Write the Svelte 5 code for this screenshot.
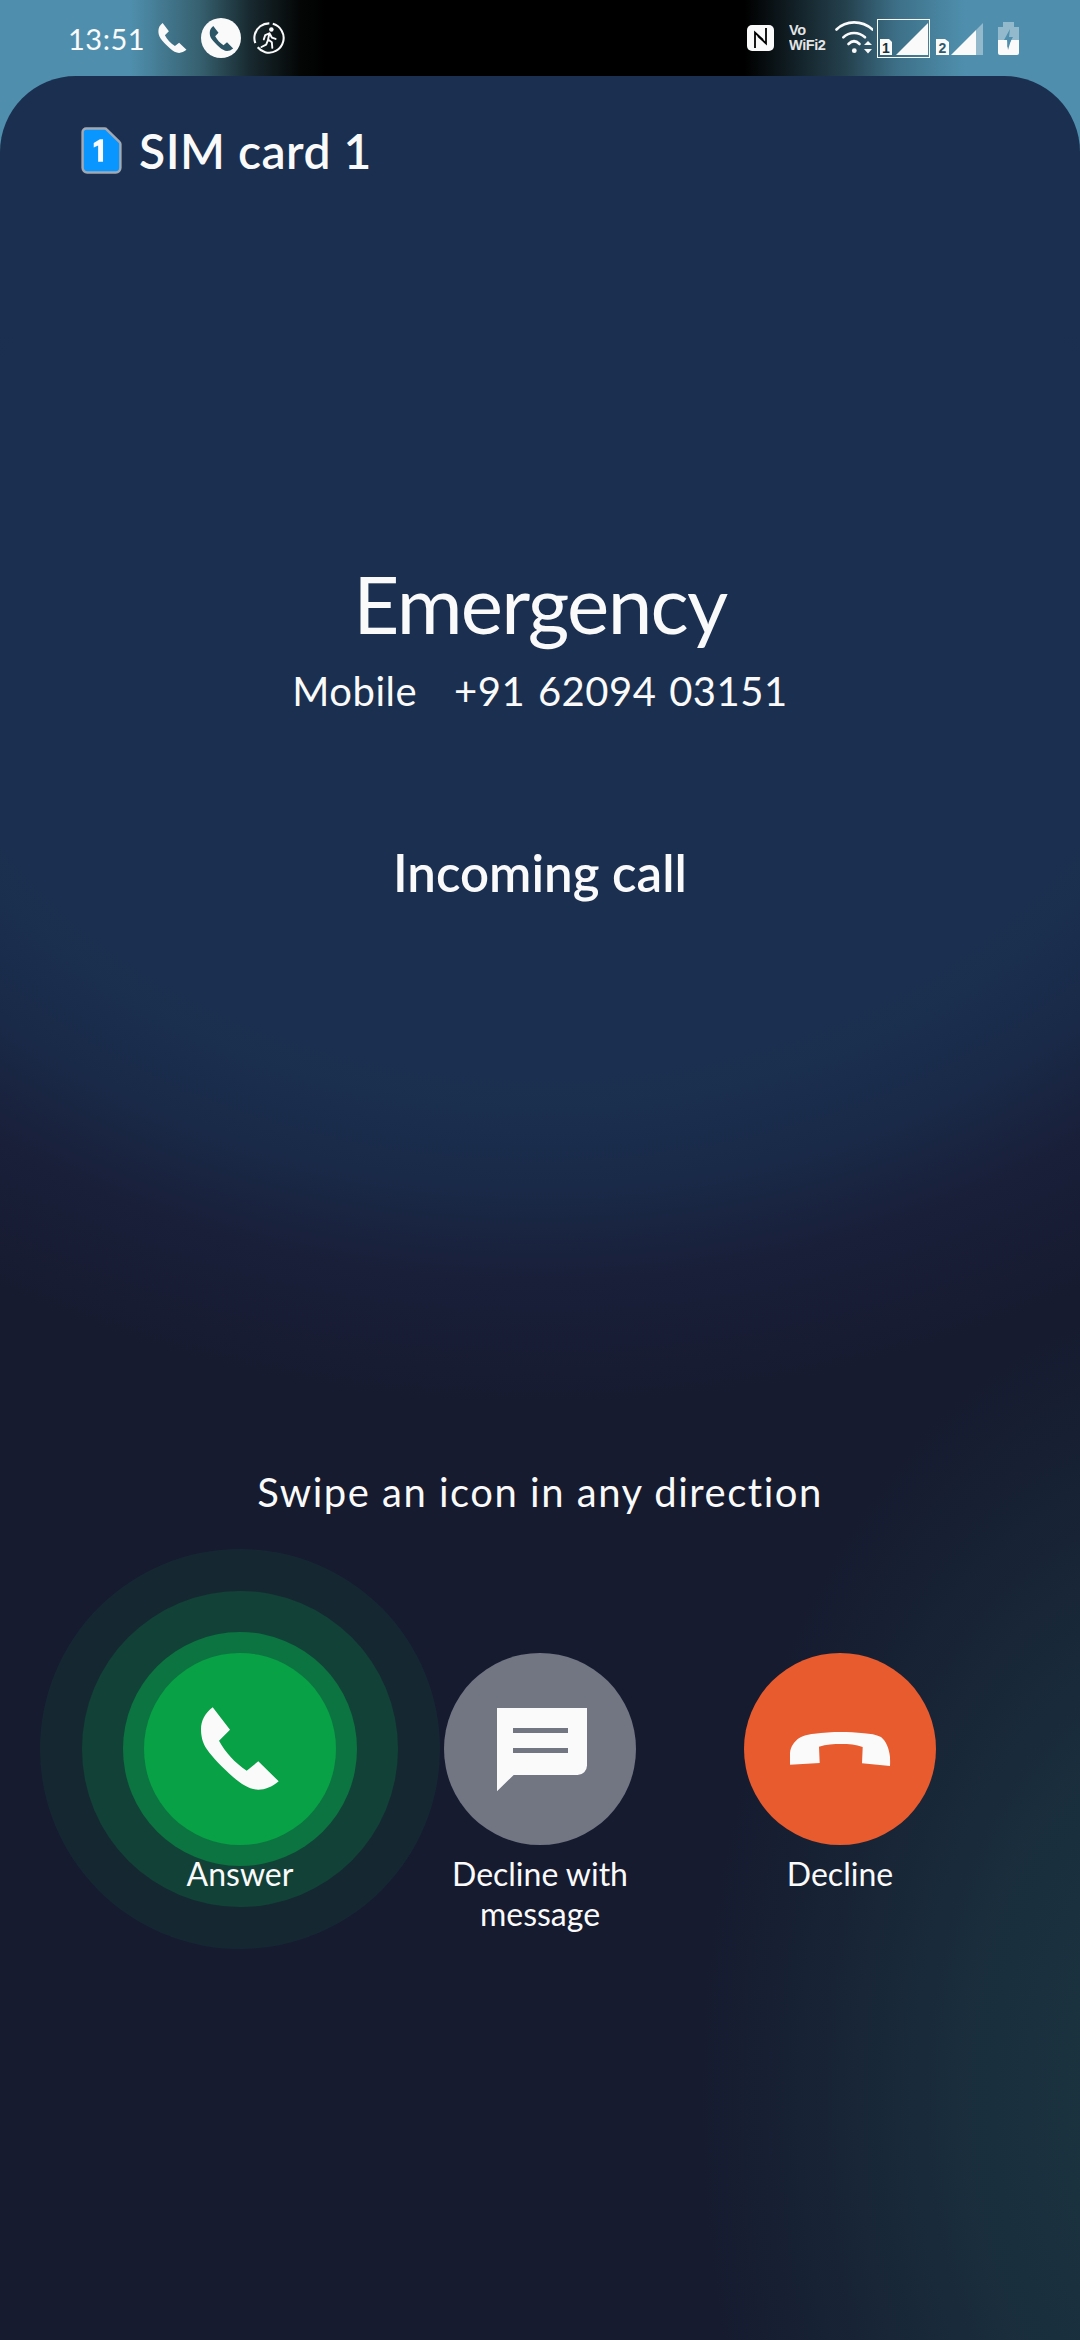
<script>
  const handset =
    'M68.7 54.3L86 76.7 75 87.7C82 100 90 109 102.7 117.7L114.3 108.3 134.7 128.3C128 134 121 136.7 114.3 136.7 106 136.7 97 131 89.3 124.3 78 114 69 105 62.7 96 58 89 57 82 57 76 57 68 61 60 68.7 54.3Z';
  const hangup =
    'M46 111.7L75.7 110 75 93.7C82 91.5 90 91 97 91 105 91 112 91.5 118.7 94L118 110.3 146 113C146.3 109 146 106 146 104 145 95 142 88 137 84 132 81.5 126 80.8 120 80.3 112 79.3 104 79 97 79 88 79 79 79.6 70.3 80.7 63 81.5 58 83 53.7 86 48 91 46 96 46 101Z';

  const actions = [
    { key: 'answer', label: 'Answer' },
    { key: 'message', label: 'Decline with message' },
    { key: 'decline', label: 'Decline' }
  ];
</script>

<div class="screen">
  <header class="status">
    <div class="status__left">
      <span class="time">13:51</span>
      <svg class="ic-call" viewBox="57 54 78 83"><path d={handset} fill="#fafafa" /></svg>
      <span class="ongoing">
        <svg viewBox="57 54 78 83"><path d={handset} fill="#2c5566" /></svg>
      </span>
      <svg class="ic-run" viewBox="0 0 36 36">
        <circle cx="18" cy="18" r="15.500" fill="none" stroke="#fafafa" stroke-width="2.200" stroke-dasharray="58 5 30 4" transform="rotate(-75 18 18)" />
        <circle cx="20.500" cy="9" r="2.400" fill="#fafafa" />
        <path d="M18.500 13l-4.500 2-1.500 4.500M18.500 13l-1.500 6.500 4 3 .5 6M18.500 13l2.500 4.500 4 1.500M17 20l-2 5-5 2.500" fill="none" stroke="#fafafa" stroke-width="2" stroke-linecap="round" stroke-linejoin="round" />
      </svg>
    </div>
    <div class="status__right">
      <svg class="ic-nfc" viewBox="0 0 27 26">
        <rect width="27" height="26" rx="5" fill="#fafafa" />
        <path d="M8 23V7.500L16 15M19 3v15.500L11 11" fill="none" stroke="#000" stroke-width="1.800" />
      </svg>
      <span class="vowifi"><span>Vo</span><span>WiFi2</span></span>
      <svg class="ic-wifi" viewBox="0 0 38 38">
        <g fill="none" stroke="#fafafa" stroke-width="2.600" stroke-linecap="round">
          <path d="M1.500 10.500C11 1 27 1 37.500 10.500" />
          <path d="M8.300 18.300C14 12.500 24 12.500 30 18.300" />
          <path d="M13.500 25C17 21.500 21 21.500 24.500 25" />
        </g>
        <circle cx="19.300" cy="31.700" r="2.400" fill="#fafafa" />
        <path d="M29 26l4-4 4 4zM29 30h8l-4 4.500z" fill="#fafafa" />
      </svg>
      <span class="signal signal--active">
        <svg viewBox="0 0 51 37">
          <path d="M2 19h9l3 3v13H2z" fill="#fafafa" />
          <text x="8" y="33" class="sim-no">1</text>
          <path d="M18 35L50 3v32z" fill="#fafafa" />
        </svg>
      </span>
      <svg class="ic-signal2" viewBox="0 0 48 37">
        <path d="M0 19h9l4 3v13H0z" fill="#fafafa" />
        <text x="6.500" y="33" class="sim-no sim-no--two">2</text>
        <path d="M15 35L40 10v25z" fill="#fafafa" />
        <path d="M40 10l7-7v32h-7z" fill="#fafafa" opacity="0.4" />
      </svg>
      <svg class="ic-battery" viewBox="0 0 21 33">
        <path d="M5 0h11v5h5v13H0V5h5z" fill="#fafafa" opacity="0.4" />
        <path d="M0 18h21v13a2 2 0 0 1-2 2H2a2 2 0 0 1-2-2z" fill="#fafafa" />
        <path d="M12 7L6 18h4l-1 8 6-11h-4z" fill="#4f8fad" />
        <path d="M9 18h4l-3 10z" fill="#4f8fad" />
      </svg>
    </div>
  </header>

  <main class="sheet">
    <div class="sim">
      <svg class="sim__icon" viewBox="0 0 40 46">
        <path d="M5 1.500h18a3 3 0 0 1 2.200 1L37.500 14.500a3 3 0 0 1 1 2.200V40a4.500 4.500 0 0 1-4.500 4.500H6A4.500 4.500 0 0 1 1.500 40V5A3.500 3.500 0 0 1 5 1.500z" fill="#0a96ff" stroke="#a3a9b3" stroke-width="2.400" />
        <path d="M21.500 12v22h-4.800V18l-4.300 2v-4.300l6-3.700z" fill="#fafafa" />
      </svg>
      <span>SIM card 1</span>
    </div>

    <section class="caller">
      <h1>Emergency</h1>
      <p class="caller__number"><span>Mobile</span><span>+91 62094 03151</span></p>
      <p class="caller__state">Incoming call</p>
    </section>

    <p class="hint">Swipe an icon in any direction</p>

    <div class="actions">
      {#each actions as action}
        <div class="action">
          <div class="action__btn action__btn--{action.key}">
            {#if action.key === 'answer'}
              <span class="ring ring--3"></span>
              <span class="ring ring--2"></span>
              <span class="ring ring--1"></span>
            {/if}
            <svg viewBox="0 0 192 192">
              {#if action.key === 'answer'}
                <path d={handset} fill="#fafafa" />
              {:else if action.key === 'message'}
                <path d="M53 55h90v57.500a9.500 9.500 0 0 1-9.500 9.500H69.700L53 138.300z" fill="#fafafa" />
                <path d="M69 75h55v5H69zM69 95h55v5H69z" fill="#727582" />
              {:else}
                <path d={hangup} fill="#fafafa" />
              {/if}
            </svg>
          </div>
          <span class="action__label">{action.label}</span>
        </div>
      {/each}
    </div>
  </main>
</div>

<style>
  :global(body) {
    margin: 0;
    background: #161b30;
  }

  .screen {
    width: 1080px;
    height: 2340px;
    display: flex;
    flex-direction: column;
    overflow: hidden;
    font-family: Lato, 'Liberation Sans', sans-serif;
    color: #fafafa;
    background: linear-gradient(90deg, #4f8fad 0, #4f8fad 130px, #36606f 200px, #18292f 250px, #040606 300px, #000 325px, #000 745px, #25424f 847px, #3d7088 897px, #4f8fad 965px);
  }

  .status {
    height: 76px;
    flex: none;
    display: flex;
    justify-content: space-between;
    align-items: flex-start;
    padding: 0 61px 0 68px;
  }

  .status__left,
  .status__right {
    display: flex;
    align-items: center;
  }

  .time {
    width: 90px;
    height: 76px;
    line-height: 78px;
    font-size: 29px;
    letter-spacing: 0.5px;
  }

  .ic-call {
    width: 29px;
    height: 30px;
  }

  .ongoing {
    width: 40px;
    height: 40px;
    margin-left: 14px;
    border-radius: 50%;
    background: #fafafa;
    display: flex;
    align-items: center;
    justify-content: center;
  }

  .ongoing svg {
    width: 25px;
    height: 25px;
  }

  .ic-run {
    width: 34px;
    height: 34px;
    margin-left: 11px;
  }

  .status__right {
    height: 76px;
  }

  .ic-nfc {
    width: 27px;
    height: 26px;
  }

  .vowifi {
    display: flex;
    flex-direction: column;
    width: 40px;
    margin-left: 15px;
    font: 700 14.500px/15px 'Liberation Sans', sans-serif;
    letter-spacing: -0.4px;
    opacity: 0.9;
  }

  .ic-wifi {
    width: 38px;
    height: 38px;
    margin-left: 6px;
  }

  .signal--active {
    width: 53px;
    height: 39px;
    margin-left: 4px;
    box-sizing: border-box;
    border: 1px solid #fafafa;
    display: block;
  }

  .signal--active svg {
    display: block;
    width: 51px;
    height: 37px;
  }

  .sim-no {
    font: 700 14px 'Liberation Sans', sans-serif;
    text-anchor: middle;
    fill: #1c3038;
  }

  .sim-no--two {
    fill: #2f5a6c;
  }

  .ic-signal2 {
    width: 48px;
    height: 37px;
    margin-left: 6px;
  }

  .ic-battery {
    width: 21px;
    height: 33px;
    margin-left: 14px;
  }

  .sheet {
    flex: 1;
    display: flex;
    flex-direction: column;
    align-items: center;
    border-radius: 76px 76px 0 0;
    background:
      radial-gradient(500px 800px at 1200px 2024px, #1b3541 0, rgba(27, 53, 65, 0.75) 45%, rgba(27, 53, 65, 0) 100%),
      linear-gradient(180deg, #1b3050 0, #1b3050 250px, rgba(27, 48, 80, 0) 450px),
      radial-gradient(888px 680px at 540px 524px, #1b3050 0, #1b3050 70%, #192a48 86%, #191f39 100%, rgba(25, 31, 57, 0) 118%),
      linear-gradient(180deg, #1b3050 0, #1b3050 620px, #161b30 900px, #161b30 100%);
  }

  .sim {
    align-self: flex-start;
    display: flex;
    align-items: center;
    margin: 49px 0 0 81px;
    height: 50px;
    font-size: 48px;
    font-weight: 600;
    letter-spacing: 0.5px;
  }

  .sim__icon {
    width: 41px;
    height: 47px;
    margin-right: 17px;
  }

  .caller {
    margin-top: 380px;
    text-align: center;
  }

  h1 {
    margin: 0;
    font-size: 80px;
    line-height: 96px;
    font-weight: 400;
    letter-spacing: -1.7px;
  }

  .caller__number {
    display: flex;
    gap: 37px;
    justify-content: center;
    margin: 14px 0 0;
    font-size: 40px;
    line-height: 52px;
    letter-spacing: 0.5px;
    word-spacing: 2px;
  }

  .caller__state {
    margin: 126px 0 0;
    font-size: 51px;
    line-height: 60px;
    font-weight: 600;
  }

  .hint {
    margin: 564px 0 0;
    font-size: 40px;
    line-height: 50px;
    letter-spacing: 1.5px;
  }

  .actions {
    width: 900px;
    padding-top: 136px;
    display: grid;
    grid-template-columns: repeat(3, 300px);
  }

  .action {
    display: flex;
    flex-direction: column;
    align-items: center;
  }

  .action__btn {
    position: relative;
    width: 192px;
    height: 192px;
    border-radius: 50%;
  }

  .action__btn svg {
    position: relative;
    display: block;
    width: 192px;
    height: 192px;
    border-radius: 50%;
  }

  .action__btn--answer svg {
    background: #08a146;
  }

  .action__btn--message svg {
    background: #727582;
  }

  .action__btn--decline svg {
    background: #e75b2e;
  }

  .ring {
    position: absolute;
    left: 50%;
    top: 50%;
    border-radius: 50%;
    transform: translate(-50%, -50%);
  }

  .ring--1 {
    width: 234px;
    height: 234px;
    background: #0c7440;
  }

  .ring--2 {
    width: 316px;
    height: 316px;
    background: #124237;
  }

  .ring--3 {
    width: 400px;
    height: 400px;
    background: #152832;
  }

  .action__label {
    position: relative;
    width: 240px;
    margin-top: 9px;
    text-align: center;
    font-size: 32px;
    line-height: 40px;
  }
</style>
